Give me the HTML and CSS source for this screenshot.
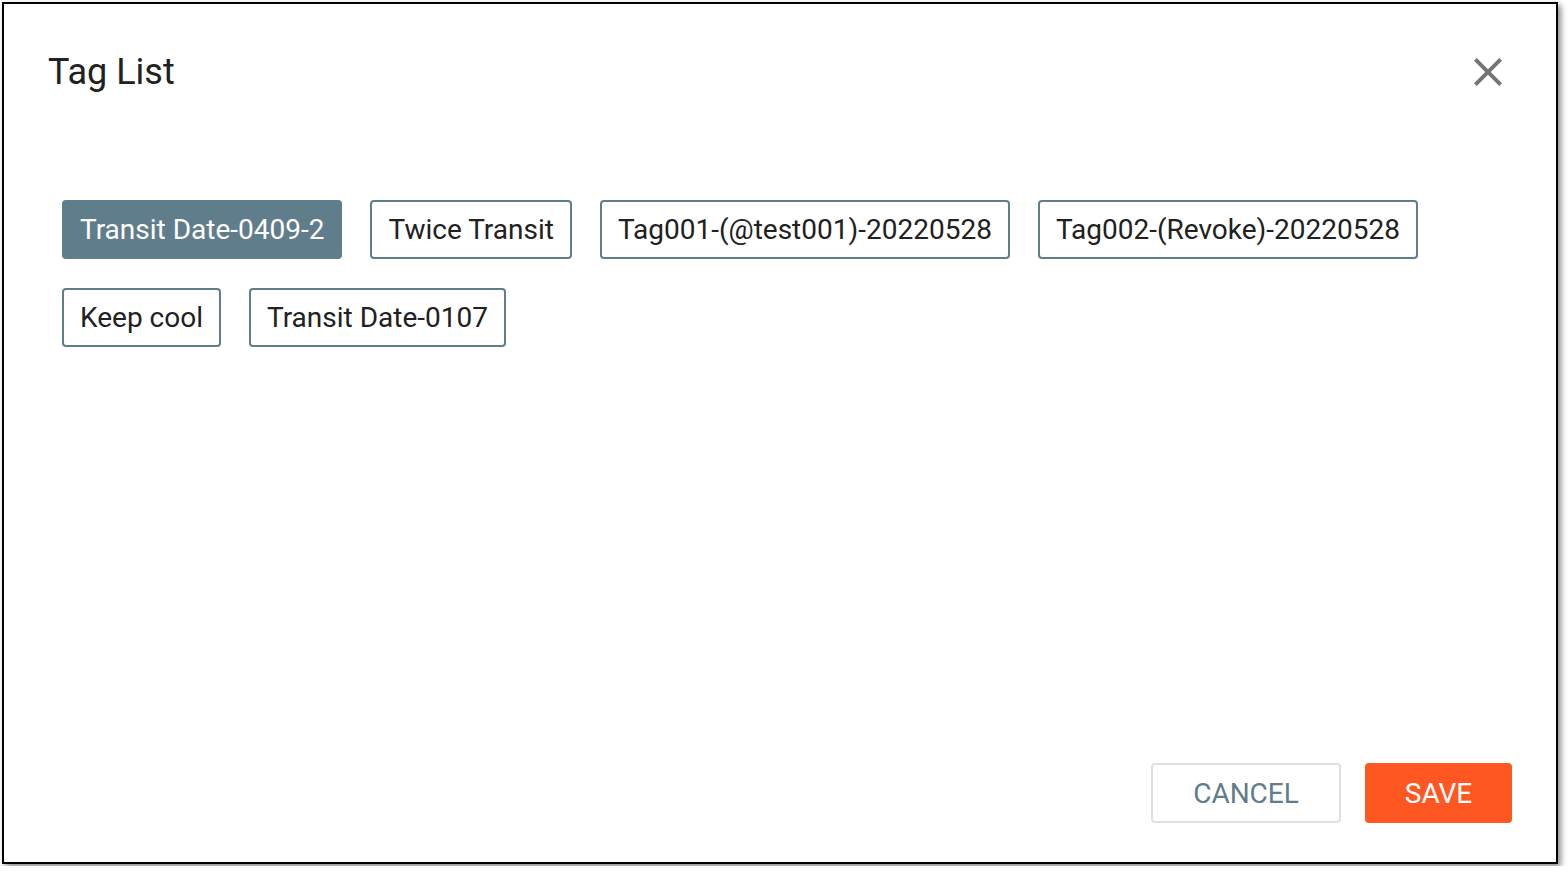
FILE: index.html
```
<!DOCTYPE html>
<html lang="en">
  <head>
    <meta charset="UTF-8" />
    <title>Tag List</title>
    <link rel="stylesheet" href="styles.css">
  </head>
  <body>
    <!-- 태그 선택 다이얼로그 -->
    <div class="dialog">
      <div class="dialog-head">
        <h2>Tag List</h2>
        <button class="close" type="button" aria-label="close">
          <svg width="48" height="48" viewBox="0 0 24 24">
            <path d="M19 6.41 17.59 5 12 10.59 6.41 5 5 6.41 10.59 12 5 17.59 6.41 19 12 13.41 17.59 19 19 17.59 13.41 12z" fill="#757575"/>
          </svg>
        </button>
      </div>

      <!-- 태그 목록 -->
      <ul class="tags">
        <li class="tag on">Transit Date-0409-2</li>
        <li class="tag">Twice Transit</li>
        <li class="tag">Tag001-(@test001)-20220528</li>
        <li class="tag">Tag002-(Revoke)-20220528</li>
        <li class="tag">Keep cool</li>
        <li class="tag">Transit Date-0107</li>
      </ul>

      <!-- 하단 버튼 -->
      <div class="dialog-foot">
        <button class="btn cancel" type="button">Cancel</button>
        <button class="btn save" type="button">Save</button>
      </div>
    </div>
  </body>
</html>
```

FILE: styles.css
```
/* 초기화 */
html,
body,
ul,
h2 {
  margin: 0;
  padding: 0;
}
ul {
  list-style: none;
}

body {
  background-color: #fff;
  font-family: Roboto, "Liberation Sans", sans-serif;
  color: #212121;
}

/* 다이얼로그 박스 */
.dialog {
  box-sizing: border-box;
  display: flex;
  flex-direction: column;
  width: 1556px;
  height: 862px;
  margin: 2px;
  padding: 44px 44px 39px 44px;
  border: 2px solid #000;
  background-color: #fff;
  box-shadow: 3px 3px 6px rgba(0, 0, 0, 0.45);
}

/* 제목줄 */
.dialog-head {
  display: flex;
  align-items: center;
  justify-content: space-between;
  height: 48px;
}
.dialog-head h2 {
  font-size: 36px;
  font-weight: 400;
  line-height: 48px;
  color: #212121;
}
.close {
  display: block;
  width: 48px;
  height: 48px;
  padding: 0;
  border: 0;
  background: none;
  cursor: pointer;
}
.close svg {
  display: block;
}

/* 태그 */
.tags {
  display: flex;
  flex-wrap: wrap;
  align-content: flex-start;
  gap: 29px 28px;
  flex: 1;
  margin-top: 104px;
  padding-left: 14px;
}
.tag {
  box-sizing: border-box;
  display: flex;
  align-items: center;
  height: 59px;
  padding: 0 16px;
  border: 2px solid #607d8b;
  border-radius: 4px;
  font-size: 28px;
  color: #212121;
  cursor: pointer;
}
.tag.on {
  background-color: #607d8b;
  color: #fff;
}

/* 버튼 */
.dialog-foot {
  display: flex;
  justify-content: flex-end;
  gap: 24px;
}
.btn {
  box-sizing: border-box;
  height: 60px;
  border-radius: 4px;
  font-family: inherit;
  font-size: 28px;
  text-transform: uppercase;
  cursor: pointer;
}
.cancel {
  width: 190px;
  border: 2px solid #e0e0e0;
  background-color: #fff;
  color: #607d8b;
}
.save {
  width: 147px;
  border: 0;
  background-color: #ff5722;
  color: #fff;
}
```
